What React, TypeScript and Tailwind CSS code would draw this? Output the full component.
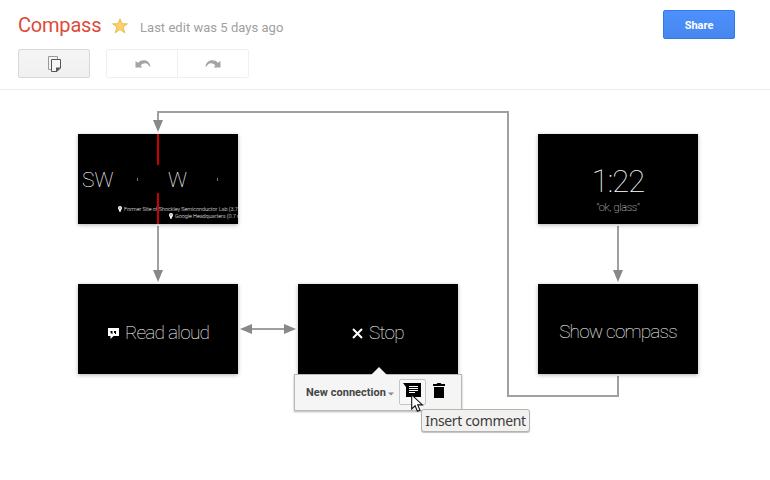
import type { ReactNode } from "react";

function CopyIcon() {
  return (
    <svg width="14" height="17" viewBox="0 0 14 17" fill="none" className="mt-px ml-px">
      <path d="M3 13.500H.5V.5h9V3" stroke="#999" />
      <path d="M3.500 3.500h9v8.500l-3.500 3.500h-5.500z" fill="#f5f5f5" stroke="#555" />
      <path d="M8 16v-4.500H13z" fill="#555" />
    </svg>
  );
}

function UndoIcon({ flip = false }: { flip?: boolean }) {
  return (
    <svg width="16" height="8" viewBox="0 0 16 8" className={flip ? "mr-px -scale-x-100" : "ml-px"}>
      <path
        d="M0.500 1L3 2.700C4.500 1 6.500.2 8.800.2C12.500.2 15 2.700 15.500 6.500H14.500C13.500 4.400 12 3.200 10 3.200C8 3.200 6.500 4.200 5.700 5.500L7.300 7.600H.5z"
        fill="#a4a4a4"
      />
    </svg>
  );
}

function PinIcon() {
  return (
    <svg width="4" height="6" viewBox="0 0 4 6" className="shrink-0">
      <path d="M2 0a2 2 0 0 0-2 2c0 1.400 1.300 2 1.500 4h1C2.700 4 4 3.400 4 2a2 2 0 0 0-2-2zm0 1.400a.6.6 0 1 1 0 1.200.6.6 0 0 1 0-1.200z" fill="#fff" fillRule="evenodd" />
    </svg>
  );
}

function Card({ place, children }: { place: string; children: ReactNode }) {
  return (
    <section className={`absolute h-[90px] w-40 overflow-hidden bg-black text-white shadow-[0_1px_4px_rgba(0,0,0,0.3)] ${place}`}>
      {children}
    </section>
  );
}

function Header() {
  return (
    <header className="flex h-[90px] justify-between border-b border-[#ebebeb] pr-[35px] pl-[18px]">
      <div>
        <div className="flex h-[49px] items-center">
          <h1 className="w-[83px] text-[20px] leading-[50px] tracking-[-0.200px] text-[#dd4b39]">Compass</h1>
          <svg width="16" height="16" viewBox="0 0 16 16" className="mt-[3px] ml-[11px]">
            <path d="M8 .8l2 5h5.400l-4.300 3.300 1.700 5.700L8 11.500l-4.800 3.300 1.700-5.700L.6 5.800H6z" fill="#ffd363" stroke="#d9b24c" strokeWidth=".8" />
          </svg>
          <span className="mt-[6px] ml-[12px] text-[13px] tracking-[0.030px] text-[#a0a0a0]">Last edit was 5 days ago</span>
        </div>
        <div className="flex gap-4">
          <button className="flex h-[29px] w-[72px] items-center justify-center rounded-[2px] border border-[#d8d8d8] bg-linear-to-b from-[#f5f5f5] to-[#f0f0f0]">
            <CopyIcon />
          </button>
          <div className="flex h-[29px] w-[143px] divide-x divide-[#f0f0f0] rounded-[2px] border border-[#f0f0f0]">
            <button className="flex w-[71px] items-center justify-center"><UndoIcon /></button>
            <button className="flex flex-1 items-center justify-center"><UndoIcon flip /></button>
          </div>
        </div>
      </div>
      <button className="mt-[10px] h-[29px] w-[72px] rounded-[2px] border border-[#3079ed] bg-linear-to-b from-[#4d90fe] to-[#4787ed] pt-[3px] text-[11px] font-bold text-white">
        Share
      </button>
    </header>
  );
}

function Connections() {
  return (
    <svg width="770" height="390" viewBox="0 90 770 390" className="absolute inset-0" fill="none">
      <g stroke="#a0a0a0" strokeWidth="2">
        <path d="M618 376v20H508V112H158v10M158 226v46M618 226v46M250 329h36" />
      </g>
      <g fill="#888">
        <path d="M153 120h10l-5 12zM153 270h10l-5 12zM613 270h10l-5 12zM240 329l12-5v10zM296 329l-12-5v10z" />
      </g>
    </svg>
  );
}

function Toolbar() {
  return (
    <div className="absolute top-[284px] left-[294px] flex h-[37px] w-[168px] items-center border border-[#b8b8b8] bg-[#f5f5f5] pl-[11px] shadow-[0_1px_2px_rgba(0,0,0,0.3)]">
      <svg width="16" height="9" viewBox="0 0 16 9" className="absolute -top-[9px] left-[76px]">
        <path d="M0 9l8-8 8 8z" fill="#f5f5f5" />
      </svg>
      <span className="mt-px w-[81px] text-[11px] font-bold tracking-[0.040px] whitespace-nowrap text-[#444]">New connection</span>
      <svg width="6" height="4" viewBox="0 0 6 4" className="mt-[3px] ml-px"><path d="M0 .5h6L3 3.500z" fill="#888" /></svg>
      <button className="-mt-px ml-[5px] flex h-[26px] w-[27px] items-start rounded-[2px] border border-[#c6c6c6] bg-[#f8f8f8] pt-[3px] pl-[3px]">
        <svg width="18" height="16" viewBox="0 0 18 16">
          <path d="M0 0h18v14H3V4z" fill="#000" />
          <path d="M6 3.500h9M6 5.500h9M6 7.500h9M6 9.500h6" stroke="#fff" />
        </svg>
      </button>
      <svg width="12" height="15" viewBox="0 0 12 15" className="-mt-[4px] ml-[7px]">
        <path d="M0 1h3.500l1-1h3l1 1H12v2H0zM1 4h10v11H1z" fill="#000" />
      </svg>
    </div>
  );
}

export default function App() {
  return (
    <div className="h-[480px] w-[770px] overflow-hidden bg-white font-['Roboto',sans-serif]">
      <Header />
      <main className="relative h-[390px]">
        <Connections />
        <Card place="top-[44px] left-[78px]">
          <span className="absolute top-[31px] left-[4px] text-[21px] leading-[30px] font-thin">SW</span>
          <span className="absolute top-[31px] left-[90px] text-[21px] leading-[30px] font-thin">W</span>
          <i className="absolute top-[44px] left-[59px] h-[3px] w-px bg-[#777]" />
          <i className="absolute top-[44px] left-[139px] h-[3px] w-px bg-[#777]" />
          <i className="absolute top-0 left-[79px] h-[31px] w-[2px] bg-[#c00]" />
          <p className="absolute top-[71px] left-[40px] flex items-center gap-[2px] text-[5.500px] leading-[8px] font-light tracking-[-0.050px] whitespace-nowrap text-[#eee]">
            <PinIcon />Former Site of Shockley Semiconductor Lab (3.7
          </p>
          <p className="absolute top-[78px] left-[91px] flex items-center gap-[2px] text-[5.500px] leading-[8px] font-light tracking-[-0.050px] whitespace-nowrap text-[#eee]">
            <PinIcon />Google Headquarters (0.7 m
          </p>
          <i className="absolute bottom-0 left-[79px] h-[31px] w-[2px] bg-[#c00]" />
        </Card>
        <Card place="top-[44px] left-[538px]">
          <div className="mt-[30px] text-center text-[31px] leading-[36px] font-thin tracking-[-1.000px]">1:22</div>
          <div className="text-center text-[11px] leading-[16px] font-thin tracking-[-0.300px]">"ok, glass"</div>
        </Card>
        <Card place="top-[194px] left-[78px]">
          <div className="flex h-[98px] items-center justify-center gap-[6px] pl-px text-[19px] font-thin tracking-[-0.800px]">
            <svg width="11" height="11" viewBox="0 0 11 11">
              <path d="M0 0h11v8H5.500L2.500 11V8H0zM2.500 3v2h1v1h1V3zM6 3v2h1v1h1V3z" fill="#fff" fillRule="evenodd" />
            </svg>
            Read aloud
          </div>
        </Card>
        <Card place="top-[194px] left-[298px]">
          <div className="flex h-[98px] items-center justify-center gap-[6px] text-[19px] font-thin tracking-[-0.750px]">
            <svg width="11" height="11" viewBox="0 0 11 11"><path d="M1 1l9 9M10 1L1 10" stroke="#fff" strokeWidth="2" /></svg>
            Stop
          </div>
        </Card>
        <Card place="top-[194px] left-[538px]">
          <div className="flex h-[96px] items-center justify-center text-[19px] font-thin tracking-[-0.820px]">Show compass</div>
        </Card>
        <Toolbar />
        <div className="absolute top-[319px] left-[421px] flex h-[23px] w-[109px] items-center justify-center rounded-[3px] border border-[#b5b3b0] bg-[#f2f1f0] font-['Noto_Sans',sans-serif] text-[14px] tracking-[-0.360px] whitespace-nowrap text-[#3c3c3c] shadow-[0_1px_1px_rgba(0,0,0,0.25)]">
          Insert comment
        </div>
        <svg width="13" height="19" viewBox="0 0 13 19" className="absolute top-[304px] left-[411px]">
          <path d="M.7.9v14l3.400-3.100 2.300 5.500 2.600-1.100-2.300-5.300h4.700z" fill="#fff" stroke="#111" strokeWidth="1.100" />
        </svg>
      </main>
    </div>
  );
}
